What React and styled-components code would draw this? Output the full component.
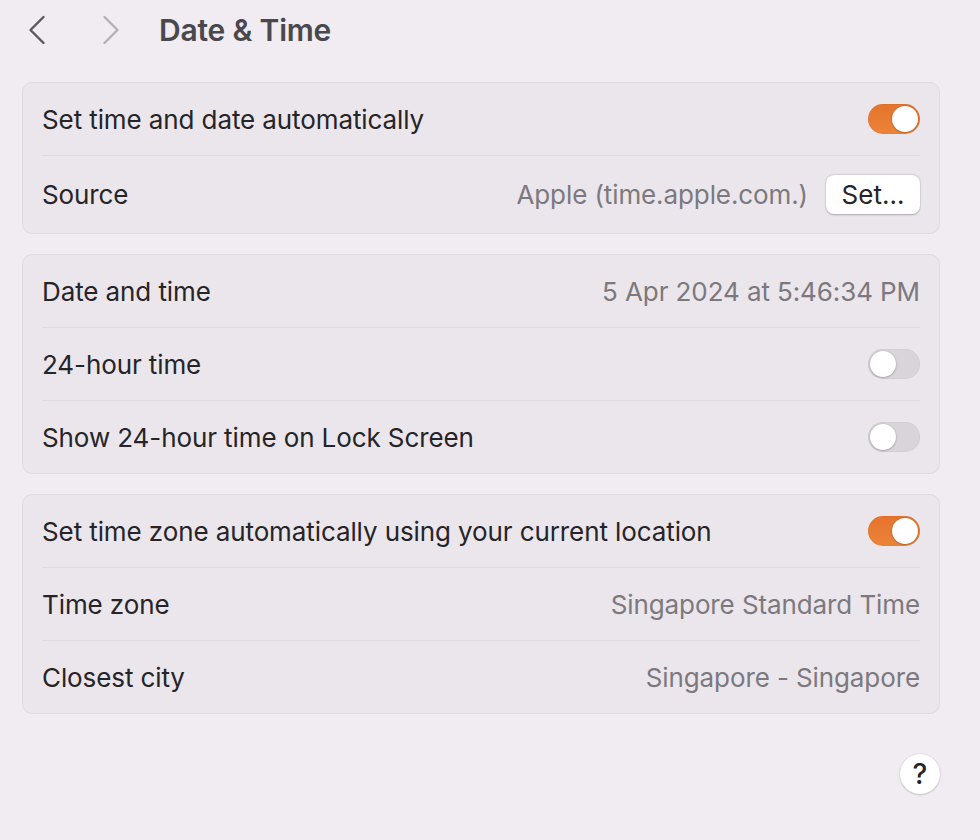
import React, { useState } from 'react';
import styled, { createGlobalStyle } from 'styled-components';

const GlobalStyle = createGlobalStyle`
  html, body {
    margin: 0;
    padding: 0;
    background: #f0ecf1;
  }
  body {
    font-family: Inter, "Noto Sans", "Liberation Sans", sans-serif;
    -webkit-font-smoothing: antialiased;
  }
`;

const Page = styled.main`
  width: 980px;
  height: 840px;
  box-sizing: border-box;
  padding: 0 40px 0 22px;
  display: flex;
  flex-direction: column;
  background: #f0ecf1;
`;

const Toolbar = styled.header`
  height: 60px;
  display: flex;
  align-items: center;
  padding-left: 6px;
  margin-bottom: 22px;
`;

const NavButton = styled.button`
  width: 18px;
  height: 30px;
  border: none;
  background: transparent;
  padding: 0;
  display: flex;
  align-items: center;
  justify-content: center;
  margin-left: ${p => p.$first ? '0' : '56px'};
  color: ${p => p.$disabled ? '#b3b0b6' : '#5b595e'};
`;

const Title = styled.h1`
  margin: 0 0 0 39px;
  font-size: 30px;
  font-weight: 600;
  color: #4a484d;
  letter-spacing: -0.2px;
`;

const Card = styled.section`
  background: #eae6ec;
  border: 1px solid #dedae0;
  border-radius: 10px;
  padding: 0 19px;
  margin-bottom: 20px;
`;

const Row = styled.div`
  height: ${p => p.$tall ? '77px' : '72px'};
  display: flex;
  align-items: center;
  justify-content: space-between;
  border-top: ${p => p.$first ? 'none' : '1.5px solid #dfdbe1'};
  gap: 16px;
`;

const Label = styled.span`
  font-size: 26px;
  color: #262427;
  letter-spacing: -0.1px;
`;

const Value = styled.span`
  font-size: 26px;
  color: #7c797e;
  letter-spacing: -0.1px;
`;

const Right = styled.div`
  display: flex;
  align-items: center;
  gap: 18px;
`;

const SetButton = styled.button`
  width: 94px;
  height: 39px;
  border: none;
  border-radius: 8px;
  background: #ffffff;
  box-shadow: 0 0.5px 2px rgba(0, 0, 0, 0.25), 0 0 0 0.5px rgba(0, 0, 0, 0.06);
  font-family: inherit;
  font-size: 26px;
  color: #262427;
  padding: 0;
`;

const Track = styled.button`
  width: 52px;
  height: 30px;
  border-radius: 15px;
  border: none;
  padding: 0;
  position: relative;
  background: ${p => p.$on ? 'linear-gradient(180deg, #e5732b, #eb8439)' : '#d8d4da'};
  box-shadow: inset 0 0 0 0.5px rgba(0, 0, 0, 0.06);
  cursor: pointer;
`;

const Knob = styled.span`
  position: absolute;
  top: 2px;
  left: ${p => p.$on ? '24px' : '2px'};
  width: 26px;
  height: 26px;
  border-radius: 50%;
  background: #ffffff;
  box-shadow: 0 0.5px 2px rgba(0, 0, 0, 0.35);
`;

const Footer = styled.div`
  flex: 1;
  display: flex;
  justify-content: flex-end;
  align-items: flex-start;
  padding-top: 20px;
`;

const HelpButton = styled.button`
  width: 40px;
  height: 40px;
  border-radius: 50%;
  border: none;
  background: #ffffff;
  box-shadow: 0 0.5px 2px rgba(0, 0, 0, 0.3);
  font-family: inherit;
  font-size: 28px;
  font-weight: 500;
  color: #262427;
  padding: 0;
  display: flex;
  align-items: center;
  justify-content: center;
`;

const Toggle = ({ initial }) => {
  const [on, setOn] = useState(initial);
  return (
    <Track $on={on} onClick={() => setOn(!on)}>
      <Knob $on={on} />
    </Track>
  );
};

const Chevron = ({ dir }) => (
  <svg width="18" height="30" viewBox="0 0 18 30" fill="none">
    <path
      d={dir === 'left' ? 'M15.5 2 L2.5 15 L15.5 28' : 'M2.5 2 L15.5 15 L2.5 28'}
      stroke="currentColor"
      strokeWidth="2.4"
      strokeLinecap="round"
      strokeLinejoin="round"
    />
  </svg>
);

const App = () => {
  return (
    <>
      <GlobalStyle />
      <Page>
        <Toolbar>
          <NavButton $first><Chevron dir="left" /></NavButton>
          <NavButton $disabled><Chevron dir="right" /></NavButton>
          <Title>Date &amp; Time</Title>
        </Toolbar>

        <Card>
          <Row $first>
            <Label>Set time and date automatically</Label>
            <Toggle initial={true} />
          </Row>
          <Row $tall>
            <Label>Source</Label>
            <Right>
              <Value>Apple (time.apple.com.)</Value>
              <SetButton>Set…</SetButton>
            </Right>
          </Row>
        </Card>

        <Card>
          <Row $first>
            <Label>Date and time</Label>
            <Value>5 Apr 2024 at 5:46:34 PM</Value>
          </Row>
          <Row>
            <Label>24-hour time</Label>
            <Toggle initial={false} />
          </Row>
          <Row>
            <Label>Show 24-hour time on Lock Screen</Label>
            <Toggle initial={false} />
          </Row>
        </Card>

        <Card>
          <Row $first>
            <Label>Set time zone automatically using your current location</Label>
            <Toggle initial={true} />
          </Row>
          <Row>
            <Label>Time zone</Label>
            <Value>Singapore Standard Time</Value>
          </Row>
          <Row>
            <Label>Closest city</Label>
            <Value>Singapore - Singapore</Value>
          </Row>
        </Card>

        <Footer>
          <HelpButton>?</HelpButton>
        </Footer>
      </Page>
    </>
  );
};

export default App;
